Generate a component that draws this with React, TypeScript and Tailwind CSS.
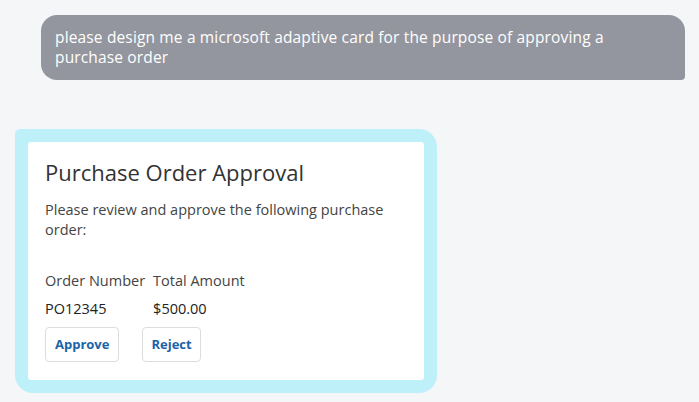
const App = () => {
  return (
    <div className="min-h-[402px] w-[699px] bg-[#f5f6f8] pt-[15px] font-['Open_Sans',sans-serif]">
      <div className="ml-[41px] mr-[14px] rounded-2xl rounded-br-[4px] bg-[#93969e] px-[14px] pb-[13px] pt-[12px] text-white">
        <p className="max-w-[600px] font-['Open_Sans',sans-serif] text-[15.5px] leading-[20px] tracking-[0.15px]">
          please design me a microsoft adaptive card for the purpose of approving a purchase order
        </p>
      </div>

      <div className="ml-[15px] mt-[49px] w-[422px] rounded-[18px] rounded-tl-[5px] bg-[#bdf0f8] p-[13px]">
        <div className="rounded-[3px] bg-white px-[17px] pb-[18px] pt-[15px] text-[#333333]">
          <h1 className="text-[22px] leading-[30px] font-normal">Purchase Order Approval</h1>
          <p className="mt-[13px] text-[14.5px] leading-[20px] text-[#444444]">
            Please review and approve the following purchase order:
          </p>

          <div className="mt-[31px] grid w-fit grid-cols-[auto_auto] gap-x-[8px] gap-y-[8px] text-[14.5px] leading-[20px]">
            <span className="text-[#444444]">Order Number</span>
            <span className="text-[#444444]">Total Amount</span>
            <span className="text-[#222222]">PO12345</span>
            <span className="text-[#222222]">$500.00</span>
          </div>

          <div className="mt-[8px] flex gap-[23px]">
            <button className="h-[35px] rounded-[4px] border border-[#dddddd] bg-white px-[9px] text-[13px] font-bold text-[#1b64a8]">
              Approve
            </button>
            <button className="h-[35px] rounded-[4px] border border-[#dddddd] bg-white px-[8px] text-[13px] font-bold text-[#1b64a8]">
              Reject
            </button>
          </div>
        </div>
      </div>
    </div>
  );
};

export default App;
